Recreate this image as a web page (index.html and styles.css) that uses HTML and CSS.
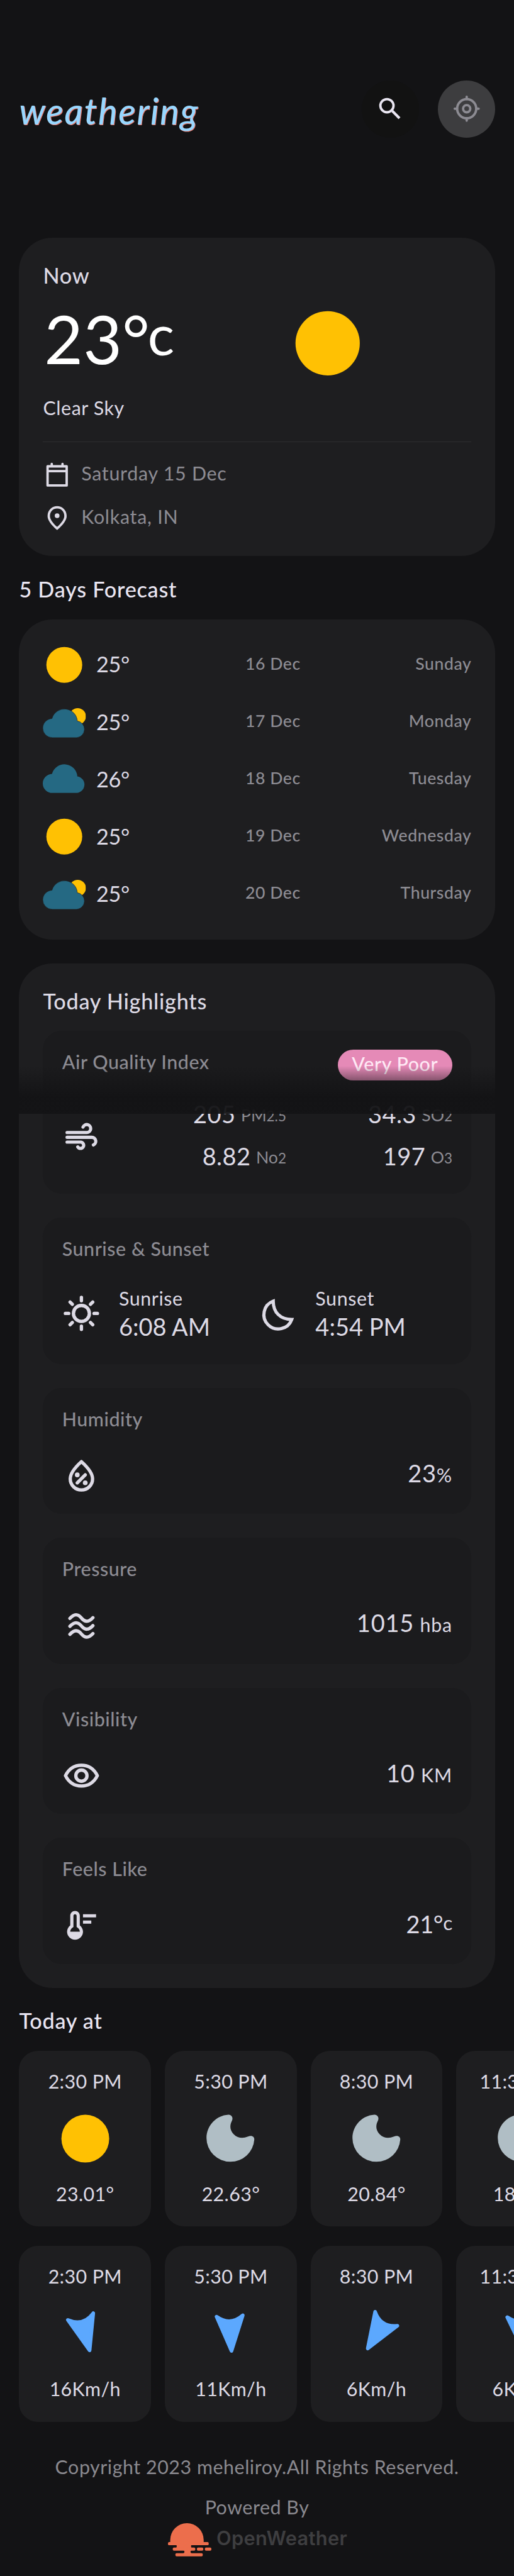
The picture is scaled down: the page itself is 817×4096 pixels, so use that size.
FILE: index.html
```html
<!DOCTYPE html>
<html lang="en">
<head>
<meta charset="utf-8">
<meta name="viewport" content="width=device-width, initial-scale=1">
<title>weathering</title>
<link rel="stylesheet" href="styles.css">
</head>
<body>
<svg class="sprite" aria-hidden="true">
  <symbol id="sun" viewBox="0 0 48 48"><circle cx="24" cy="24" r="20" fill="#ffc103"/></symbol>
  <symbol id="cloud" viewBox="0 0 36 36"><path fill="#256983" d="M8 29.400a8 8 0 0 1-8-8c0-4.300 3.300-7.700 7.700-8A10.800 10.800 0 0 1 28.900 15.500a7 7 0 0 1-.5 13.900z"/></symbol>
  <symbol id="cloud-sun" viewBox="0 0 36 36"><circle cx="29.200" cy="13.200" r="6.900" fill="#ffc103"/><path fill="#256983" stroke="#1e1e20" stroke-width=".35" d="M8 31a8 8 0 0 1-8-8c0-4.300 3.300-7.700 7.700-8A10.800 10.800 0 0 1 28.900 17.100a7 7 0 0 1-.5 13.900z"/></symbol>
  <symbol id="moon" viewBox="0 0 48 48"><path fill="#b0bec5" d="M22.100 3.900c2.200-.2 4 2 3.300 4.200-.1.600-.4 1-.6 1.500C23 13.500 23.600 17.500 26.800 20.500 30 23.600 34 24.100 38.500 22.300 41.400 20.900 44 22.200 43.800 24.800A20 19.800 0 0 1 23.800 43.300 20 19.800 0 0 1 3.800 23.500C3.800 13 12 4.500 22.100 3.900z"/></symbol>
  <symbol id="arrow" viewBox="0 0 48 48"><path fill="#5ca8fe" stroke="#5ca8fe" stroke-width="3" stroke-linejoin="round" d="M13 8.700Q24 17.400 35 8.700L24 38z"/></symbol>
</svg>

<header class="header">
  <span class="logo">weathering</span>
  <div class="actions">
    <button class="round search" aria-label="Search"><svg class="i24" viewBox="0 0 24 24" fill="none" stroke="currentColor" stroke-width="2"><circle cx="9.500" cy="9.500" r="5.500"/><path d="m14 14 6 6" stroke-width="2.200"/></svg></button>
    <button class="round locate" aria-label="Current location"><svg class="i24" viewBox="0 0 24 24" fill="none" stroke="currentColor" stroke-width="2" stroke-linecap="round"><circle cx="12" cy="12" r="8"/><circle cx="12" cy="12" r="3"/><path d="M12 2v2M12 20v2M2 12h2M20 12h2"/></svg></button>
  </div>
</header>

<main>
  <section class="card now">
    <h2>Now</h2>
    <div class="temp-row">
      <p class="temp">23°<sup>c</sup></p>
      <svg class="now-icon" viewBox="0 0 64 64"><circle cx="32" cy="32" r="26.900" fill="#ffc103"/></svg>
    </div>
    <p class="sky">Clear Sky</p>
    <ul class="meta">
      <li><svg class="i24" viewBox="0 0 24 24" fill="none" stroke="currentColor" stroke-width="2" stroke-linejoin="round" stroke-linecap="round"><path d="M4 5h16v16H4zM4 9h16M7.500 3v2M16.500 3v2"/></svg><span>Saturday 15 Dec</span></li>
      <li><svg class="i24" viewBox="0 0 24 24"><path fill="currentColor" fill-rule="evenodd" d="M12 2C8 2 4 5.100 4 10.200c0 3.300 2.700 7.200 8 11.800 5.300-4.600 8-8.500 8-11.800C20 5.100 16 2 12 2zm0 17.400c-4-3.700-6-6.700-6-9.200C6 6.500 8.700 4 12 4s6 2.500 6 6.200c0 2.500-2 5.500-6 9.200z"/><circle cx="12" cy="10" r="2" fill="currentColor"/></svg><span>Kolkata, IN</span></li>
    </ul>
  </section>

  <h2 class="section-title">5 Days Forecast</h2>
  <ul class="card forecast">
    <li><svg><use href="#sun"/></svg><b>25°</b><span>16 Dec</span><em>Sunday</em></li>
    <li><svg><use href="#cloud-sun"/></svg><b>25°</b><span>17 Dec</span><em>Monday</em></li>
    <li><svg><use href="#cloud"/></svg><b>26°</b><span>18 Dec</span><em>Tuesday</em></li>
    <li><svg><use href="#sun"/></svg><b>25°</b><span>19 Dec</span><em>Wednesday</em></li>
    <li><svg><use href="#cloud-sun"/></svg><b>25°</b><span>20 Dec</span><em>Thursday</em></li>
  </ul>

  <section class="card highlights">
    <h2>Today Highlights</h2>
    <div class="tile air">
      <div class="tile-head"><h3>Air Quality Index</h3><span class="badge">Very Poor</span></div>
      <div class="air-body">
        <svg class="i32" viewBox="0 0 24 24" fill="none" stroke="currentColor" stroke-width="2" stroke-linecap="round"><path d="M3 9h12.500a2.500 2.500 0 1 0-2.500-3.400M3 12h15.500a2.500 2.500 0 0 1 1 4.800M3 15h8.700a2 2 0 1 1-2 3"/></svg>
        <ul class="air-grid">
          <li>205 <small>PM<sub>2.5</sub></small></li>
          <li>34.3 <small>SO<sub>2</sub></small></li>
          <li>8.82 <small>No<sub>2</sub></small></li>
          <li>197 <small>O<sub>3</sub></small></li>
        </ul>
      </div>
    </div>
    <div class="tile">
      <h3>Sunrise &amp; Sunset</h3>
      <div class="suntimes">
        <div class="suntime">
          <svg class="i32" viewBox="0 0 24 24" fill="none" stroke="currentColor" stroke-width="2.100" stroke-linecap="round"><circle cx="12" cy="12" r="5"/><path d="M12 1.950v2.100M12 19.950v2.100M1.950 12h2.100M19.950 12h2.100M4.900 4.900l1.400 1.400M17.700 17.700l1.400 1.400M4.900 19.100l1.400-1.400M17.700 6.300l1.400-1.400"/></svg>
          <div><p>Sunrise</p><p class="time">6:08 AM</p></div>
        </div>
        <div class="suntime">
          <svg class="i32" viewBox="0 0 24 24" fill="none" stroke="currentColor" stroke-width="2"><path d="M9.200 4.300A9 9 0 1 0 20.800 15.800C13.800 15.800 9.200 11.500 9.200 4.300z"/></svg>
          <div><p>Sunset</p><p class="time">4:54 PM</p></div>
        </div>
      </div>
    </div>
    <div class="tile">
      <h3>Humidity</h3>
      <div class="tile-body"><svg class="i32" viewBox="0 0 24 24" fill="none" stroke="currentColor" stroke-width="2.100" stroke-linecap="round" stroke-linejoin="round"><path d="M12 3.200C8 6.800 5 10.500 5 14a7 7 0 0 0 14 0C19 10.500 16 6.800 12 3.200zM14.400 11.500l-5 5"/><circle cx="9.400" cy="11.500" r="1.500" fill="currentColor" stroke="none"/><circle cx="14.400" cy="16.500" r="1.500" fill="currentColor" stroke="none"/></svg><p>23<small>%</small></p></div>
    </div>
    <div class="tile">
      <h3>Pressure</h3>
      <div class="tile-body"><svg class="i32" viewBox="0 0 24 24" fill="none" stroke="currentColor" stroke-width="2.100" stroke-linecap="round"><path d="M4.800 7.200C7.500 4.300 9.800 4.300 12 7S16.500 9.700 19.200 6.800M4.800 12.200C7.500 9.300 9.800 9.300 12 12S16.500 14.700 19.200 11.800M4.800 17.200C7.500 14.300 9.800 14.300 12 17S16.500 19.700 19.200 16.800"/></svg><p>1015 <small>hba</small></p></div>
    </div>
    <div class="tile">
      <h3>Visibility</h3>
      <div class="tile-body"><svg class="i32" viewBox="0 0 24 24" fill="none" stroke="currentColor" stroke-width="2.100" stroke-linejoin="round"><path d="M2 12C4 8 7.500 5.500 12 5.500S20 8 22 12C20 16 16.500 18.500 12 18.500S4 16 2 12z"/><circle cx="12" cy="12" r="3.500"/></svg><p>10 <small>KM</small></p></div>
    </div>
    <div class="tile">
      <h3>Feels Like</h3>
      <div class="tile-body"><svg class="i32" viewBox="0 0 24 24" fill="currentColor"><path d="M13 5h8.200v2H13zM13 9h5.200v2H13zM11 12V6c0-1.660-1.340-3-3-3S5 4.340 5 6v6c-1.210.91-2 2.370-2 4 0 2.760 2.240 5 5 5s5-2.240 5-5c0-1.630-.79-3.090-2-4zM5 16c0-.94.45-1.840 1.200-2.400L7 13V6c0-.55.45-1 1-1s1 .45 1 1v7l.8.6c.75.56 1.200 1.460 1.200 2.400z"/></svg><p class="feels">21°<sup>c</sup></p></div>
    </div>
  </section>

  <h2 class="section-title">Today at</h2>
  <div class="slider">
    <ul class="track">
      <li><p>2:30 PM</p><svg><use href="#sun"/></svg><p>23.01°</p></li>
      <li><p>5:30 PM</p><svg><use href="#moon"/></svg><p>22.63°</p></li>
      <li><p>8:30 PM</p><svg><use href="#moon"/></svg><p>20.84°</p></li>
      <li><p>11:30 PM</p><svg><use href="#moon"/></svg><p>18.95°</p></li>
    </ul>
    <ul class="track">
      <li><p>2:30 PM</p><svg style="transform:rotate(-15deg)"><use href="#arrow"/></svg><p>16Km/h</p></li>
      <li><p>5:30 PM</p><svg style="transform:rotate(-3deg)"><use href="#arrow"/></svg><p>11Km/h</p></li>
      <li><p>8:30 PM</p><svg style="transform:rotate(32deg)"><use href="#arrow"/></svg><p>6Km/h</p></li>
      <li><p>11:30 PM</p><svg style="transform:rotate(-5deg)"><use href="#arrow"/></svg><p>6Km/h</p></li>
    </ul>
  </div>
</main>

<footer class="footer">
  <p>Copyright 2023 meheliroy.All Rights Reserved.</p>
  <p>Powered By</p>
  <div class="brand">
    <svg viewBox="68 80 327 250" fill="#ec6e4c"><path d="M85 230V206a126 126 0 0 1 252 0v24zM120 240H256a14 14 0 0 0 0 28H120a14 14 0 0 0 0-28zM180 284H250a11 11 0 0 0 0 24H180a11 11 0 0 0 0-24z"/><rect x="68" y="222" width="307" height="24" rx="9"/><rect x="104" y="264" width="170" height="23" rx="9"/><rect x="286" y="264" width="48" height="23" rx="9"/><rect x="346" y="264" width="49" height="23" rx="9"/><rect x="124" y="306" width="206" height="24" rx="9"/></svg>
    <span>OpenWeather</span>
  </div>
</footer>
<div class="fade"></div>
</body>
</html>
```

FILE: styles.css
```css
html { font-size: 19px; }
* { box-sizing: border-box; margin: 0; padding: 0; }
ul { list-style: none; }
button { border: 0; font: inherit; }
svg { display: block; flex: none; }

body {
  position: relative;
  width: 43rem;
  height: 4096px;
  overflow: hidden;
  background: #131315;
  color: #dddae5;
  font-family: Lato, "Open Sans", sans-serif;
  font-size: 1.6rem;
  line-height: 2.4rem;
  letter-spacing: .019em;
}
.sprite { position: absolute; width: 0; height: 0; }
.i24 { width: 2.4rem; height: 2.4rem; }
.i32 { width: 3.2rem; height: 3.2rem; }

/* header */
.header {
  display: flex;
  justify-content: space-between;
  align-items: center;
  height: 18.24rem;
  padding: 0 1.56rem 0 1.6rem;
}
.logo {
  padding-top: .42rem;
  color: #98d7ff;
  font-size: 3rem;
  font-style: italic;
  font-weight: 500;
  letter-spacing: .033em;
  text-shadow: .06rem .06rem 0 #e87a6c;
}
.actions { display: flex; gap: 1.6rem; }
.round {
  display: grid;
  place-items: center;
  width: 4.8rem;
  height: 4.8rem;
  border-radius: 50%;
}
.search { background: #121212; color: #eae6f2; }
.locate { background: #3d3d3f; color: #8c8b92; }

/* cards */
main { padding: 1.63rem 1.56rem 0 1.6rem; }
.card { border-radius: 2.8rem; background: #1e1e20; padding: 2rem; }
h2 { font-size: 1.8rem; font-weight: 500; line-height: 2.28rem; letter-spacing: .022em; }
.section-title { margin: 1.57rem 0 1.3rem; line-height: 2.4rem; color: #eae6f2; }

.temp-row { display: flex; height: 6.4rem; margin-top: 1.39rem; }
.temp {
  width: 20.62rem;
  padding-left: .1rem;
  color: #fff;
  font-size: 5.6rem;
  line-height: 5.6rem;
  letter-spacing: .002em;
}
.temp sup { margin-left: -.2rem; font-size: 4.67rem; line-height: 0; vertical-align: .77rem; }
.now-icon { width: 6.4rem; height: 6.4rem; }
.sky { margin-top: 1rem; }
.meta {
  display: grid;
  gap: 1.2rem;
  margin-top: 1.6rem;
  padding-top: 1.56rem;
  border-top: .1rem solid #2c2c2e;
}
.meta li { display: flex; align-items: center; gap: .8rem; height: 2.4rem; }
.meta span { padding-bottom: .24rem; color: #8d8c93; letter-spacing: .024em; }

/* forecast */
.forecast { display: grid; gap: 1.2rem; }
.forecast li {
  display: grid;
  grid-template-columns: 3.6rem 7.6rem 10.35rem 1fr;
  align-items: center;
  height: 3.6rem;
}
.forecast svg { width: 3.6rem; height: 3.6rem; }
.forecast b { padding: 0 0 .05rem .85rem; font-size: 1.8rem; font-weight: 400; letter-spacing: -.01em; }
.forecast span, .forecast em {
  padding-bottom: .14rem;
  color: #8d8c93;
  font-size: 1.4rem;
  font-style: normal;
  font-weight: 500;
  text-align: right;
}

/* highlights */
.highlights { display: flex; flex-direction: column; gap: 2rem; margin-top: 2rem; }
.highlights > h2 { margin-bottom: -.62rem; }
.tile { border-radius: 1.6rem; background: #1b1b1d; padding: 1.58rem 1.6rem 1.6rem; }
.tile h3 { color: #8d8c93; font-size: 1.6rem; font-weight: 500; line-height: 2.1rem; letter-spacing: .018em; }
.tile-head { display: flex; justify-content: space-between; height: 2.57rem; }
.badge {
  width: 9.6rem;
  border-radius: 1.3rem;
  background: #e58ab7;
  color: #ffe9f5;
  font-weight: 500;
  line-height: 2.4rem;
  text-align: center;
}
.air { padding-bottom: 1.89rem; }
.air-body { display: flex; align-items: center; margin-top: 1.63rem; }
.air-body svg { margin-top: .26rem; }
.air-grid {
  display: grid;
  grid-template-columns: 1fr 13.9rem;
  row-gap: 1.14rem;
  flex: 1;
  font-size: 2rem;
  letter-spacing: .01em;
  text-align: right;
  word-spacing: -.08rem;
}
.air-grid small { color: #8d8c93; font-size: 1.4rem; line-height: 0; letter-spacing: 0; vertical-align: .16rem; }
.air-grid sub { font-size: 1.18rem; vertical-align: baseline; }
.suntimes { display: flex; gap: 1.6rem; margin-top: 2.05rem; padding-bottom: .3rem; }
.suntime { display: flex; align-items: center; gap: 1.55rem; width: 14.84rem; }
.suntime p { line-height: 2.08rem; white-space: nowrap; }
.suntime .time { margin-top: .16rem; font-size: 2rem; line-height: 2.4rem; letter-spacing: 0; }
.tile-body { display: flex; justify-content: space-between; align-items: center; height: 3.2rem; margin-top: 2.07rem; }
.tile-body p { padding-bottom: .24rem; font-size: 2rem; letter-spacing: .02em; word-spacing: -.05rem; }
.tile-body small { font-size: 1.6rem; }
.tile-body .feels { letter-spacing: -.01em; }
.tile-body sup { font-size: 1.67rem; line-height: 0; vertical-align: .28rem; }

/* hourly slider */
.slider { display: grid; gap: 1.65rem; width: 41.4rem; overflow: hidden; }
.track { display: flex; gap: 1.15rem; }
.track li {
  display: flex;
  flex: none;
  flex-direction: column;
  align-items: center;
  width: 11.04rem;
  height: 14.7rem;
  padding-top: 1.52rem;
  border-radius: 1.6rem;
  background: #1e1e20;
}
.track p { line-height: 2.08rem; letter-spacing: .012em; }
.track svg { width: 4.8rem; height: 4.8rem; margin: 1.37rem 0 1.17rem; }

/* footer */
.footer {
  display: flex;
  flex-direction: column;
  align-items: center;
  gap: .97rem;
  padding-top: 2.62rem;
  color: #8a898f;
  letter-spacing: .0175em;
}
.brand { display: flex; width: 14.94rem; gap: .45rem; margin-top: -.85rem; color: #3e3e40; }
.brand svg { width: 3.63rem; height: 2.78rem; }
.brand span { padding-top: .02rem; font-family: Inter, sans-serif; font-size: 1.62rem; font-weight: 600; letter-spacing: .01em; }

/* bottom edge fade of the first viewport */
.fade {
  position: absolute;
  top: 89.2rem;
  left: 0;
  width: 100%;
  height: 4rem;
  background: linear-gradient(180deg, rgba(19, 19, 21, 0), rgba(19, 19, 21, .97) 65%, rgba(19, 19, 21, .94));
}
```
